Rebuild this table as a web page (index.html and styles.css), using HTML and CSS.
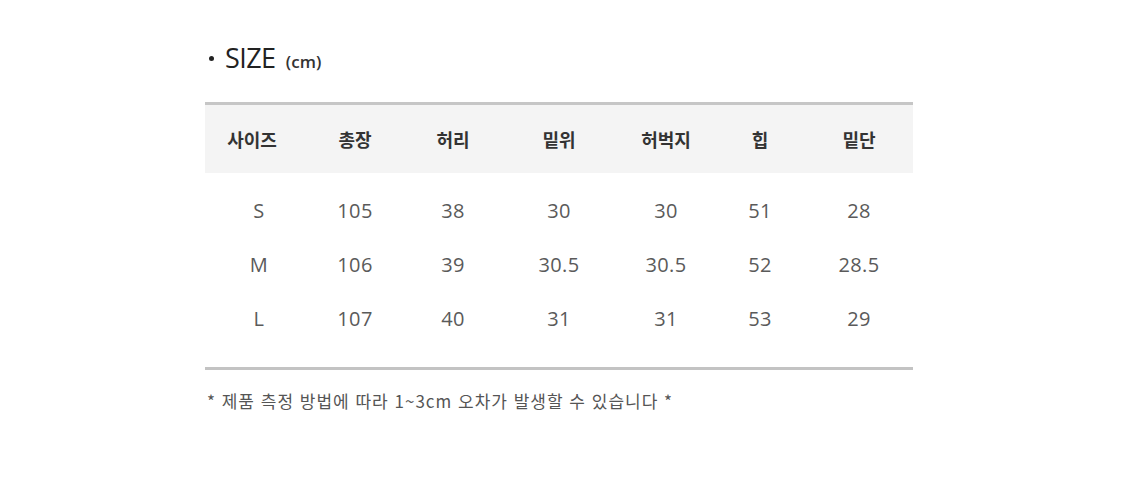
FILE: index.html
```html
<!DOCTYPE html>
<html lang="ko">
<head>
<meta charset="utf-8">
<title>SIZE</title>
<link rel="stylesheet" href="styles.css">
</head>
<body>
<div class="wrap">
  <h2 class="title"><span class="dot"></span>SIZE <span class="unit">(cm)</span></h2>
  <table class="size-table">
    <colgroup>
      <col class="c1"><col class="c2"><col class="c3"><col class="c4"><col class="c5"><col class="c6"><col class="c7">
    </colgroup>
    <thead>
      <tr><th>사이즈</th><th>총장</th><th>허리</th><th>밑위</th><th>허벅지</th><th>힙</th><th>밑단</th></tr>
    </thead>
    <tbody>
      <tr class="first"><td>S</td><td>105</td><td>38</td><td>30</td><td>30</td><td>51</td><td>28</td></tr>
      <tr><td>M</td><td>106</td><td>39</td><td>30.5</td><td>30.5</td><td>52</td><td>28.5</td></tr>
      <tr class="last"><td>L</td><td>107</td><td>40</td><td>31</td><td>31</td><td>53</td><td>29</td></tr>
    </tbody>
  </table>
  <p class="note">* 제품 측정 방법에 따라 1~3cm 오차가 발생할 수 있습니다 *</p>
</div>
</body>
</html>
```
FILE: styles.css
```css
html, body {
  margin: 0;
  padding: 0;
  background: #fff;
}
.wrap {
  padding: 40px 0 0 205px;
  width: 708px;
  font-family: "Open Sans", "Noto Sans CJK KR", sans-serif;
}
.title {
  margin: 0 0 22px 0;
  font-size: 27px;
  font-weight: 400;
  color: #222;
  line-height: 36px;
  letter-spacing: -0.6px;
}
.title .dot {
  display: inline-block;
  width: 5px;
  height: 5px;
  border-radius: 50%;
  background: #222;
  margin: 0 11px 0 4px;
  vertical-align: 7px;
}
.title .unit {
  font-size: 17px;
  letter-spacing: 0;
  margin-left: 4px;
  font-weight: 600;
  color: #333;
}
.size-table {
  width: 708px;
  border-collapse: collapse;
  table-layout: fixed;
  border-top: 3px solid #c6c6c6;
  border-bottom: 3px solid #c3c3c3;
}
.c1 { width: 100px; }
.c2 { width: 100px; }
.c3 { width: 96px; }
.c4 { width: 116px; }
.c5 { width: 98px; }
.c6 { width: 90px; }
.c7 { width: 108px; }
.size-table thead th {
  background: #f4f4f4;
  height: 68px;
  padding: 0;
  font-family: "Noto Sans CJK KR", sans-serif;
  font-size: 18px;
  font-weight: 700;
  color: #333;
  text-align: center;
}
.size-table th:first-child {
  padding-right: 6px;
}
.size-table td {
  height: 54px;
  padding: 0;
  text-align: center;
  font-size: 20px;
  letter-spacing: 0.4px;
  color: #5a5a5a;
}
.size-table td:first-child {
  padding-left: 8px;
}
.size-table tr.first td {
  padding-top: 10px;
}
.size-table tr.last td {
  padding-bottom: 22px;
}
.note {
  margin: 18px 0 0 2px;
  font-size: 17px;
  letter-spacing: 1px;
  color: #555;
  font-family: "Noto Sans CJK KR", sans-serif;
}
```
